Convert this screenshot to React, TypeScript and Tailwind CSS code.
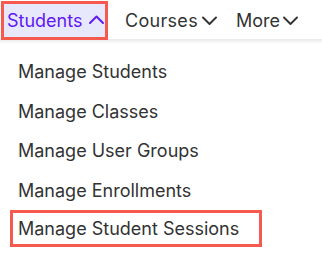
const items = ['Manage Students', 'Manage Classes', 'Manage User Groups', 'Manage Enrollments'];

function Chevron({ up }: { up?: boolean }) {
  return (
    <svg width="15" height="9" viewBox="0 0 15 9" fill="none" stroke="currentColor" strokeWidth="1.9" strokeLinecap="round" strokeLinejoin="round">
      <polyline points={up ? '1,8 7.5,1.5 14,8' : '1,1.5 7.5,8 14,1.5'} />
    </svg>
  );
}

export default function App() {
  return (
    <div className="h-[254px] w-[322px] bg-white font-['Inter',sans-serif] text-[18px]">
      <div className="h-[41px] bg-white">
        <div className="flex h-[39px] items-center">
          <div className="ml-[1px] mt-[2px] flex h-[39px] w-[107px] items-center gap-[7px] border-[3px] border-[#f65a4e] bg-[#e8e8fd] pl-[3px] text-[#5e19f5]">
            <span>Students</span>
            <span className="-mt-[2px]"><Chevron up /></span>
          </div>
          <div className="ml-[17px] mt-[2px] flex items-center gap-[4px] text-[#333]">
            <span className="tracking-[0.3px]">Courses</span>
            <Chevron />
          </div>
          <div className="ml-[19px] mt-[2px] flex items-center gap-[3px] text-[#333]">
            <span>More</span>
            <Chevron />
          </div>
        </div>
        <div className="h-[5px] bg-gradient-to-b from-[#e9e9e9] to-white" />
      </div>
      <ul className="pt-[11px] text-[#333]">
        {items.map((t) => (
          <li key={t} className="flex h-[39.5px] items-center pl-[18px]">
            {t}
          </li>
        ))}
        <li className="ml-[10px] flex h-[37px] w-[252px] items-center border-[3px] border-[#f65a4e] pl-[5px]">
          Manage Student Sessions
        </li>
      </ul>
    </div>
  );
}
